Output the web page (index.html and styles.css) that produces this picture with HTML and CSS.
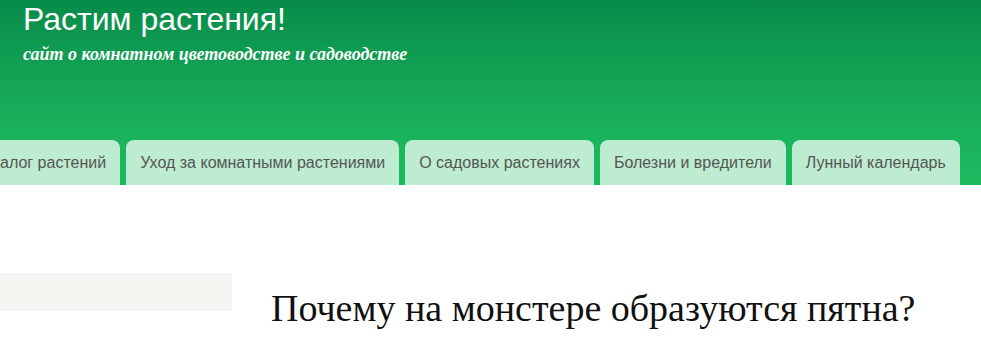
FILE: index.html
```html
<!DOCTYPE html>
<html lang="ru">
<head>
    <meta charset="UTF-8">
    <meta name="viewport" content="width=device-width, initial-scale=1.0">
    <title>Растим растения!</title>
    <link rel="stylesheet" href="styles.css">
</head>
<body>
    <header class="site-header">
        <div class="brand">
            <div class="site-title">Растим растения!</div>
            <div class="site-desc">сайт о комнатном цветоводстве и садоводстве</div>
        </div>
        <nav class="tabs">
            <a class="tab" href="#">Каталог растений</a>
            <a class="tab" href="#">Уход за комнатными растениями</a>
            <a class="tab" href="#">О садовых растениях</a>
            <a class="tab" href="#">Болезни и вредители</a>
            <a class="tab" href="#">Лунный календарь</a>
        </nav>
    </header>

    <div class="content">
        <aside class="sidebar">
            <div class="search-box"></div>
        </aside>
        <main class="main">
            <h1>Почему на монстере образуются пятна?</h1>
        </main>
    </div>
</body>
</html>
```

FILE: styles.css
```css
body {
    margin: 0;
    font-family: 'Liberation Serif', 'Times New Roman', serif;
    background: #fff;
    overflow: hidden;
}

.site-header {
    height: 185px;
    display: flex;
    flex-direction: column;
    justify-content: space-between;
    background: linear-gradient(to bottom, #078c4a 0%, #1bb25c 70%, #1cb85e 100%);
}

.brand {
    padding: 1px 0 0 23px;
}

.site-title {
    font-family: 'Liberation Sans', Arial, sans-serif;
    font-size: 32px;
    line-height: 36px;
    color: #fff;
}

.site-desc {
    font-family: 'Liberation Serif', Georgia, serif;
    font-style: italic;
    font-weight: bold;
    font-size: 18px;
    color: #fff;
    margin-top: 7px;
}

.tabs {
    display: flex;
    gap: 6px;
    margin-left: -39px;
}

.tab {
    display: block;
    height: 45px;
    line-height: 45px;
    padding: 0 14px;
    background: #bdecd0;
    border-radius: 8px 8px 0 0;
    font-family: 'Liberation Sans', Arial, sans-serif;
    font-size: 16px;
    color: #555;
    text-decoration: none;
    white-space: nowrap;
}

.content {
    display: flex;
    gap: 39px;
    padding-top: 88px;
}

.sidebar {
    width: 232px;
    flex-shrink: 0;
}

.search-box {
    height: 38px;
    background: #f5f5f2;
}

.main h1 {
    margin: 13px 0 0;
    font-weight: normal;
    font-size: 38px;
    color: #111;
}
```
